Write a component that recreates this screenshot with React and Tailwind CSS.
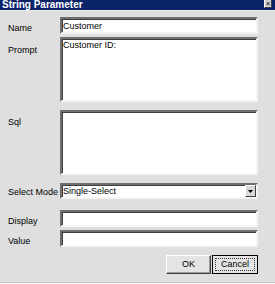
import { useState } from "react";

// sunken 3d edge used by the text fields
const sunken =
  "bg-white border-2 border-t-[#6f6f6f] border-l-[#6f6f6f] border-b-[#f4f4f4] border-r-[#f4f4f4] shadow-[inset_1px_1px_0_#404040]";

const Row = ({ label, pt, children, className = "" }) => (
  <div className={`flex items-start ${className}`}>
    <div className={`w-[52px] shrink-0 ${pt}`}>{label}</div>
    <div className="w-[198px]">{children}</div>
  </div>
);

const StringParameter = () => {
  const [form, setForm] = useState({
    name: "Customer",
    prompt: "Customer ID:",
    sql: "",
    display: "",
    value: "",
  });

  const onChange = (e) => setForm({ ...form, [e.target.name]: e.target.value });

  return (
    <div
      className="w-[275px] h-[284px] bg-[#dfdfdf] text-[9px] leading-[11px] text-black flex flex-col overflow-hidden"
      style={{ fontFamily: '"Liberation Sans", Arial, sans-serif' }}
    >
      {/* title bar */}
      <div className="h-[11px] bg-[#0a246a] flex justify-between items-end overflow-hidden shrink-0 border-b border-[#efefef]">
        <span className="text-white font-bold text-[10px] leading-[10px] pl-[2px]">
          String Parameter
        </span>
        <span className="w-[8px] h-[9px] mr-[3px] mb-[2px] bg-[#d4d4d4] border border-t-white border-l-white border-b-[#404040] border-r-[#404040] flex items-center justify-center text-[7px] leading-none text-[#333] font-bold">
          ×
        </span>
      </div>

      <div className="flex flex-col pl-[8px] pt-[6px]">
        <Row label="Name" pt="pt-[6px]">
          <input
            name="name"
            value={form.name}
            onChange={onChange}
            className={`${sunken} w-full h-[17px] px-[1px] outline-none text-[9px]`}
          />
        </Row>

        <Row label="Prompt" pt="pt-[8px]" className="mt-[3px]">
          <textarea
            name="prompt"
            value={form.prompt}
            onChange={onChange}
            className={`${sunken} w-full h-[65px] px-[1px] pt-[1px] outline-none resize-none block text-[9px] leading-[11px]`}
          />
        </Row>

        <Row label="Sql" pt="pt-[7px]" className="mt-[8px]">
          <textarea
            name="sql"
            value={form.sql}
            onChange={onChange}
            className={`${sunken} w-full h-[65px] px-[1px] outline-none resize-none block text-[9px]`}
          />
        </Row>

        <Row label="Select Mode" pt="pt-[4px]" className="mt-[8px] whitespace-nowrap">
          <div className={`${sunken} w-full h-[16px] flex items-center justify-between`}>
            <span className="pl-[1px]">Single-Select</span>
            <span className="w-[11px] h-[12px] bg-[#d8d8d8] border border-t-white border-l-white border-b-[#404040] border-r-[#404040] flex items-center justify-center">
              <svg width="5" height="3" viewBox="0 0 5 3">
                <path d="M0 0h5L2.5 3z" fill="#000" />
              </svg>
            </span>
          </div>
        </Row>

        <Row label="Display" pt="pt-[6px]" className="mt-[11px]">
          <input
            name="display"
            value={form.display}
            onChange={onChange}
            className={`${sunken} w-full h-[17px] px-[1px] outline-none text-[9px]`}
          />
        </Row>

        <Row label="Value" pt="pt-[6px]" className="mt-[3px]">
          <input
            name="value"
            value={form.value}
            onChange={onChange}
            className={`${sunken} w-full h-[17px] px-[1px] outline-none text-[9px]`}
          />
        </Row>

        <div className="flex justify-end gap-[1px] mt-[8px] pr-[17px]">
          <button className="w-[45px] h-[19px] bg-[#e4e4e4] border border-t-white border-l-white border-b-[#404040] border-r-[#404040] shadow-[inset_-1px_-1px_0_#9a9a9a]">
            OK
          </button>
          <button className="w-[46px] h-[19px] bg-[#e4e4e4] border border-black p-[2px]">
            <span className="block w-full h-full border border-dotted border-[#333] leading-[11px]">
              Cancel
            </span>
          </button>
        </div>
      </div>

      <div className="mt-auto h-[2px] bg-[#f6f6f6] border-t border-[#c8c8c8]" />
    </div>
  );
};

export default function App() {
  return <StringParameter />;
}
